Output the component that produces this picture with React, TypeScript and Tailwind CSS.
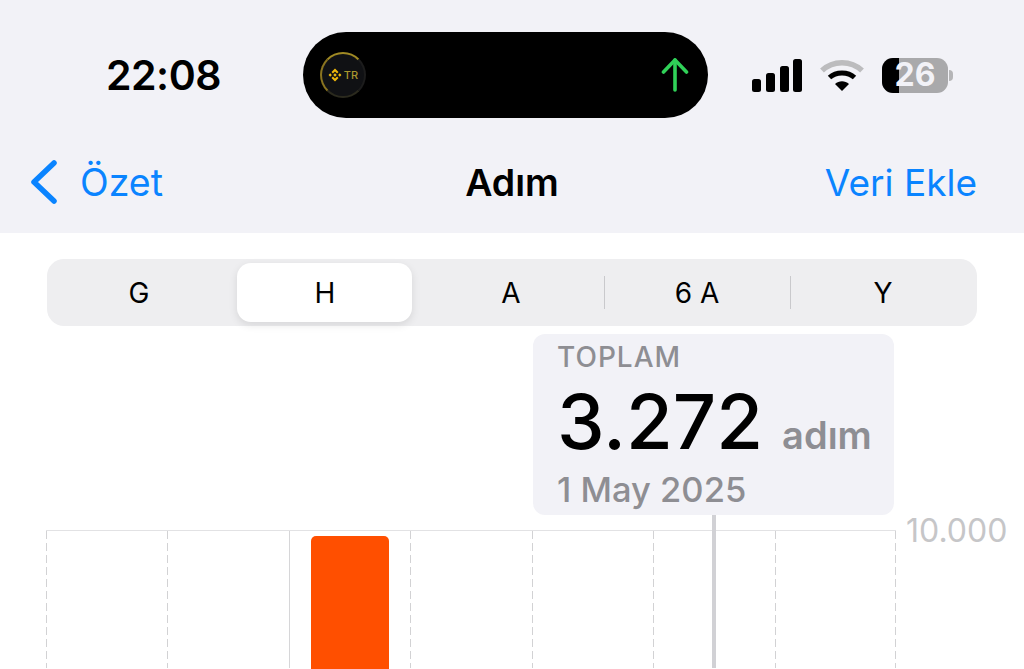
import React from 'react';

const font = { fontFamily: 'Inter, "Noto Sans", sans-serif' };

function BinanceMark() {
  return (
    <svg width="14" height="14" viewBox="0 0 24 24" fill="#f0b90b">
      <path d="M12 1l6 6-2.4 2.4L12 5.8 8.4 9.4 6 7z" />
      <path d="M12 23l-6-6 2.4-2.4 3.6 3.6 3.6-3.6L18 17z" />
      <path d="M1 12l2.8-2.8L6.6 12l-2.8 2.8z" />
      <path d="M23 12l-2.8-2.8-2.8 2.8 2.8 2.8z" />
      <path d="M12 9l3 3-3 3-3-3z" />
    </svg>
  );
}

function DynamicIsland() {
  return (
    <div className="w-[405px] h-[86px] rounded-[43px] bg-black flex items-center justify-between pl-[17px] pr-[17px]">
      <div className="w-[46px] h-[46px] rounded-full bg-[#101114] border-[2px] border-t-[#a08a24] border-l-[#8a7420] border-r-[#1c1c1c] border-b-[#2b2a1e] flex items-center justify-center gap-[2px]">
        <BinanceMark />
        <span className="text-[11px] leading-none font-medium text-[#a8962e]">TR</span>
      </div>
      <svg width="30" height="36" viewBox="0 0 30 36" fill="none" stroke="#30d158" strokeWidth="3.6" strokeLinecap="round" strokeLinejoin="round">
        <path d="M14 33V3" />
        <path d="M2.5 15L14 3l11.5 12" />
      </svg>
    </div>
  );
}

function StatusIcons() {
  return (
    <div className="flex items-center">
      <svg width="50" height="33" viewBox="0 0 50 33" fill="#000">
        <rect x="0" y="20" width="9" height="13" rx="2.5" />
        <rect x="14" y="14" width="9" height="19" rx="2.5" />
        <rect x="28" y="7" width="9" height="26" rx="2.5" />
        <rect x="41" y="0" width="9" height="33" rx="2.5" />
      </svg>
      <svg className="ml-[18px]" width="44" height="33" viewBox="0 0 44 33" fill="none">
        <path d="M2 11.5C13 1 31 1 42 11.5" stroke="#bcbcbe" strokeWidth="5.5" strokeLinecap="butt" />
        <path d="M9.5 18.5C16 12.5 28 12.5 34.5 18.5" stroke="#000" strokeWidth="5" />
        <path d="M22 32l-7-7c4-3.6 10-3.6 14 0z" fill="#000" />
      </svg>
      <div className="ml-[18px] flex items-center">
        <div className="w-[66px] h-[35px] rounded-[11px] relative bg-[#a9a9ab] flex items-center justify-center">
          <div className="absolute left-0 top-0 bottom-0 w-[17px] rounded-l-[11px] bg-black" />
          <span className="relative text-[32px] leading-none font-bold text-[#f2f2f7]">26</span>
        </div>
        <div className="ml-[1px] w-[4px] h-[11px] rounded-r-full bg-[#b5b5b7]" />
      </div>
    </div>
  );
}

function SegmentedControl() {
  const items = ['G', 'H', 'A', '6 A', 'Y'];
  return (
    <div className="mx-[47px] mt-[26px] h-[67px] rounded-[17px] bg-[#eeeef0] grid grid-cols-5">
      {items.map((item, i) => (
        <div key={item} className="relative flex items-center justify-center text-[28px] text-black pr-[2px] pt-[1px]">
          {i === 1 && (
            <div className="absolute left-[4px] right-[7px] top-[4px] bottom-[4px] rounded-[14px] bg-white shadow-[0_3px_8px_rgba(0,0,0,0.1)]" />
          )}
          {i > 2 && <div className="absolute left-[-1px] top-[17px] bottom-[17px] w-[1px] bg-[#c9c9cc]" />}
          <span className="relative">{item}</span>
        </div>
      ))}
    </div>
  );
}

function Chart() {
  return (
    <div className="relative mt-[15px] ml-[46px] flex items-start">
      <div className="w-[850px] h-[138px] border-t-[1.5px] border-[#e2e2e4] grid grid-cols-7">
        {[0, 1, 2, 3, 4, 5, 6].map((i) => (
          <div key={i} className="relative h-full">
            {i === 2 ? (
              <div className="absolute left-0 top-0 bottom-0 w-[1px] bg-[#d6d6d8]" />
            ) : (
              <div className="absolute left-0 top-0 bottom-0 w-[1px] bg-[linear-gradient(#d2d2d4_65%,transparent_65%)] bg-[length:1px_12px] bg-repeat-y" />
            )}
            {i === 6 && (
              <div className="absolute right-0 top-0 bottom-0 w-[1px] bg-[linear-gradient(#d2d2d4_65%,transparent_65%)] bg-[length:1px_12px] bg-repeat-y" />
            )}
            {i === 2 && <div className="ml-[22px] mr-[21px] mt-[5px] h-full rounded-t-[5px] bg-[#ff4f00]" />}
          </div>
        ))}
      </div>
      <span className="ml-[10px] -mt-[18px] text-[32px] leading-[38px] text-[#c6c6c8]">10.000</span>
      {/* selection cursor */}
      <div className="absolute left-[666px] top-[-15px] bottom-0 w-[4px] bg-[#d1d1d5]" />
    </div>
  );
}

export default function App() {
  return (
    <div className="w-[1024px] h-[669px] overflow-hidden bg-white" style={font}>
      <div className="h-[233px] bg-[#f2f2f7]">
        <div className="pt-[32px] h-[118px] flex items-start">
          <div className="w-[303px] h-[86px] pl-[106px] flex items-center">
            <span className="text-[41px] leading-none font-semibold text-black tracking-[-0.5px]">22:08</span>
          </div>
          <DynamicIsland />
          <div className="h-[86px] pl-[44px] flex items-center">
            <StatusIcons />
          </div>
        </div>
        <div className="mt-[40px] h-[48px] px-[30px] pr-[47px] flex items-center justify-between relative">
          <div className="flex items-center gap-[22px] text-[#0a84ff]">
            <svg width="28" height="46" viewBox="0 0 28 46" fill="none" stroke="#0a84ff" strokeWidth="5.5" strokeLinecap="round" strokeLinejoin="round">
              <path d="M24 4L4 23l20 19" />
            </svg>
            <span className="text-[37.5px] leading-none mt-[1px]">Özet</span>
          </div>
          <span className="absolute left-0 right-0 mt-[1px] text-center text-[37.5px] leading-none font-semibold text-black">Adım</span>
          <span className="text-[37px] leading-none text-[#0a84ff]">Veri Ekle</span>
        </div>
      </div>
      <SegmentedControl />
      <div className="ml-[533px] mt-[8px] w-[361px] h-[181px] rounded-[12px] bg-[#f2f2f7] pl-[24px] pt-[6px]">
        <div className="text-[28px] leading-[34px] font-medium tracking-[1px] text-[#8e8e93]">TOPLAM</div>
        <div className="flex items-baseline mt-[4px]">
          <span className="text-[76px] leading-[86px] font-medium text-black">3.272</span>
          <span className="ml-[19px] text-[38px] leading-none font-semibold text-[#8e8e93]">adım</span>
        </div>
        <div className="mt-[5px] text-[34.5px] leading-[42px] font-medium text-[#8e8e93]">1 May 2025</div>
      </div>
      <Chart />
    </div>
  );
}
